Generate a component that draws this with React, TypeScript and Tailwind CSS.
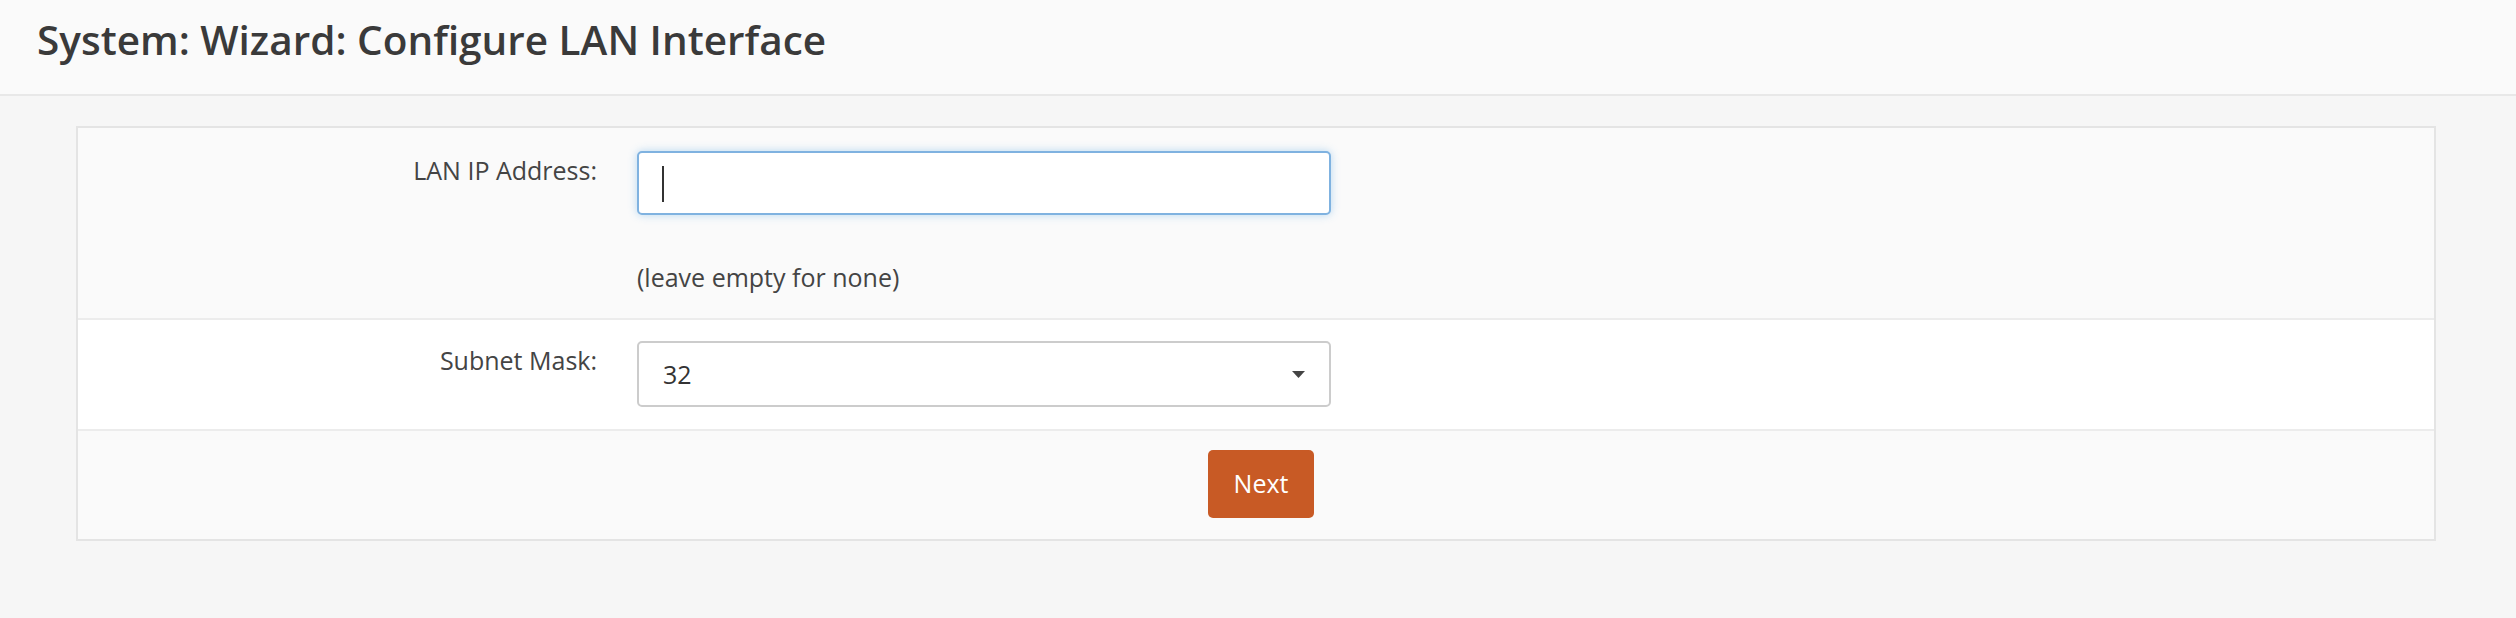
import { useState } from "react";

const font = "font-['Open_Sans',_'Noto_Sans',_sans-serif]";

function Field({ label, children }: { label: string; children: React.ReactNode }) {
  return (
    <div className="flex">
      <div className="w-[519px] shrink-0 pt-[1px] text-right text-[25px] leading-[36px] text-[#444]">{label}</div>
      <div className="ml-[40px] w-[694px] shrink-0">{children}</div>
    </div>
  );
}

export default function App() {
  const [mask] = useState("32");

  return (
    <div className={`min-h-screen bg-[#f6f6f6] ${font}`}>
      {/* page title */}
      <header className="h-[96px] border-b-2 border-[#e8e8e8] bg-[#fafafa] pl-[37px] pt-[12px]">
        <h1 className="text-[40.5px] font-semibold leading-[56px] text-[#3a3a3a]">
          System: Wizard: Configure LAN Interface
        </h1>
      </header>

      <div className="pl-[76px] pr-[80px] pt-[30px]">
        <div className="border-2 border-[#e4e4e4]">
          {/* LAN IP */}
          <div className="bg-[#fafafa] pt-[23px] pb-[23px]">
            <Field label="LAN IP Address:">
              <div className="relative">
                <input
                  readOnly
                  className="block h-[64px] w-full rounded-[5px] border-2 border-[#7fb2e0] bg-white px-[24px] text-[25px] text-[#333] caret-transparent shadow-[0_0_9px_rgba(102,175,233,0.45)] outline-none"
                />
                <span className="absolute left-[25px] top-[15px] h-[36px] w-[2px] bg-[#333]" />
              </div>
              <p className="mt-[44px] text-[25px] leading-[36px] text-[#444]">(leave empty for none)</p>
            </Field>
          </div>

          {/* subnet */}
          <div className="border-t-2 border-[#ececec] bg-white pt-[21px] pb-[22px]">
            <Field label="Subnet Mask:">
              <div className="flex h-[66px] items-center justify-between rounded-[5px] border-2 border-[#cccccc] bg-white pl-[24px] pr-[24px] text-[25px] text-[#333]">
                <span className="pt-[2px]">{mask}</span>
                <svg width="13" height="7" viewBox="0 0 13 7" className="mt-[1px]">
                  <path d="M0 0h13L6.5 7z" fill="#444" />
                </svg>
              </div>
            </Field>
          </div>

          {/* actions */}
          <div className="flex justify-center border-t-2 border-[#ececec] bg-[#fafafa] pt-[19px] pb-[21px] pl-[10px]">
            <button className="h-[68px] w-[106px] rounded-[5px] bg-[#c85a25] text-[25px] text-white">Next</button>
          </div>
        </div>
      </div>
    </div>
  );
}
